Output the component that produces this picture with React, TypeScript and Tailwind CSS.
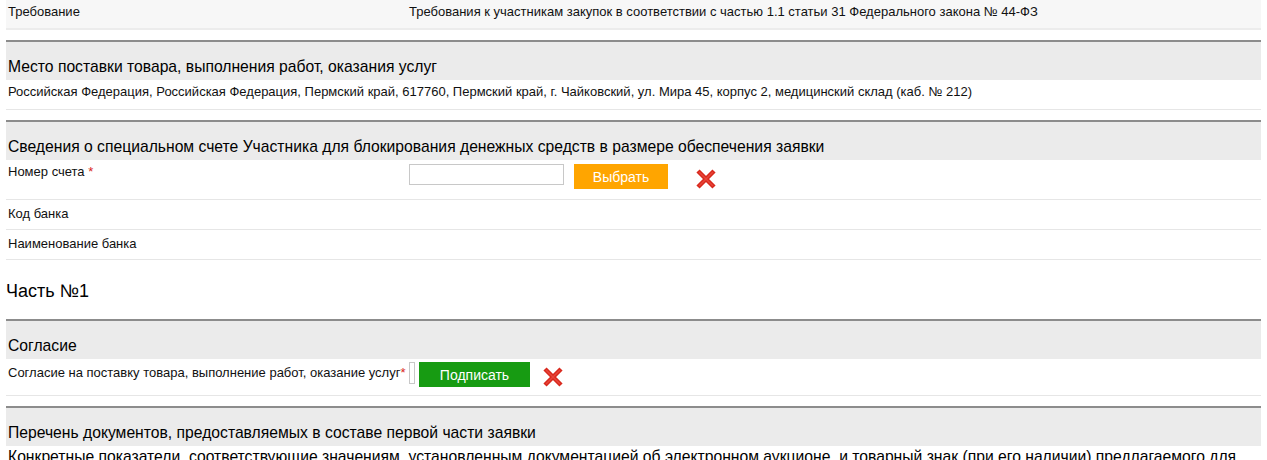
import React from "react";

function RedCross() {
  return (
    <svg width="22" height="22" viewBox="0 0 22 22" className="block">
      <path d="M3 3 L19 19 M19 3 L3 19" stroke="#d8281c" strokeWidth="4.5" strokeLinecap="butt" />
      <path d="M4 4 L18 18 M18 4 L4 18" stroke="#e8453a" strokeWidth="1.5" />
    </svg>
  );
}

function SectionHeader({ children }: { children: React.ReactNode }) {
  return (
    <div className="border-t-2 border-[#8c8c8c] bg-[#ebebeb] px-[2px] pt-[14px] pb-[3px] text-[15.7px] leading-[21px] text-black">
      {children}
    </div>
  );
}

function Row({
  label,
  children,
  required,
  className = "",
}: {
  label: string;
  children?: React.ReactNode;
  required?: boolean;
  className?: string;
}) {
  return (
    <div className={`flex border-b border-[#e6e6e6] text-[13px] leading-[16px] ${className}`}>
      <div className="w-[403px] shrink-0 px-[2px]">
        {label}
        {required && <span className="text-[#d9261c]"> *</span>}
      </div>
      <div className="flex-1">{children}</div>
    </div>
  );
}

export default function App() {
  return (
    <div className="h-[460px] overflow-hidden bg-white px-[6px] text-[#111] [font-family:'Liberation_Sans',Arial,sans-serif]">
      <div className="flex h-[30px] border-b-2 border-[#ececec] bg-[#f7f7f7] pt-[4px] text-[13px] leading-[16px]">
        <div className="w-[403px] shrink-0 px-[2px]">Требование</div>
        <div>Требования к участникам закупок в соответствии с частью 1.1 статьи 31 Федерального закона № 44-ФЗ</div>
      </div>

      <div className="mt-[10px]">
        <SectionHeader>Место поставки товара, выполнения работ, оказания услуг</SectionHeader>
        <div className="h-[30px] border-b border-[#e6e6e6] px-[2px] pt-[4px] text-[13px] leading-[16px]">
          Российская Федерация, Российская Федерация, Пермский край, 617760, Пермский край, г. Чайковский, ул. Мира 45, корпус 2, медицинский склад (каб. № 212)
        </div>
      </div>

      <div className="mt-[10px]">
        <SectionHeader>
          Сведения о специальном счете Участника для блокирования денежных средств в размере обеспечения заявки
        </SectionHeader>
        <Row label="Номер счета" required className="h-[40px] pt-[4px]">
          <div className="flex items-start">
            <input
              type="text"
              className="h-[21px] w-[155px] border border-[#c8c8c8] bg-white"
            />
            <button
              type="button"
              className="ml-[10px] h-[25px] w-[94px] bg-[#ffa500] text-[14px] text-white"
            >
              Выбрать
            </button>
            <div className="ml-[27px] mt-[4px]">
              <RedCross />
            </div>
          </div>
        </Row>
        <Row label="Код банка" className="h-[30px] pt-[6px]" />
        <Row label="Наименование банка" className="h-[30px] pt-[6px]" />
      </div>

      <div className="flex h-[59px] items-center pt-[3px] text-[18px] leading-[22px] text-black">Часть №1</div>

      <div>
        <SectionHeader>Согласие</SectionHeader>
        <div className="flex h-[37px] border-b border-[#e6e6e6] pt-[3px] text-[13px] leading-[16px]">
          <div className="w-[403px] shrink-0 px-[2px] pt-[3px]">
            Согласие на поставку товара, выполнение работ, оказание услуг
            <span className="text-[#d9261c]">*</span>
          </div>
          <div className="flex items-start">
            <div className="h-[22px] w-[6px] border border-[#c8c8c8]" />
            <button
              type="button"
              className="ml-[4px] h-[25px] w-[111px] bg-[#179b12] text-[14px] text-white"
            >
              Подписать
            </button>
            <div className="ml-[12px] mt-[4px]">
              <RedCross />
            </div>
          </div>
        </div>
      </div>

      <div className="mt-[10px]">
        <SectionHeader>Перечень документов, предоставляемых в составе первой части заявки</SectionHeader>
        <div className="px-[2px] text-[15.7px] leading-[21px] text-black">
          Конкретные показатели, соответствующие значениям, установленным документацией об электронном аукционе, и товарный знак (при его наличии) предлагаемого для поставки товара
        </div>
      </div>
    </div>
  );
}
